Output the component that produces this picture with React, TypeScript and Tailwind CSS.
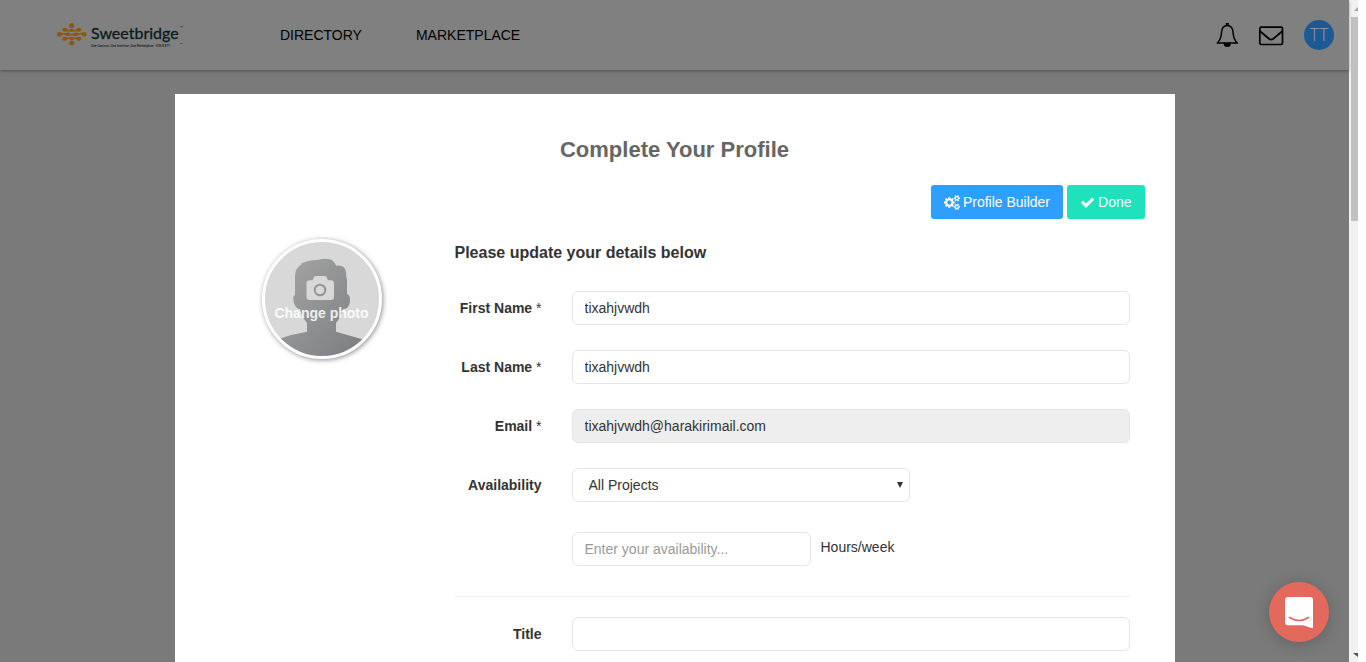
import React from "react";

const field =
  "h-[34px] rounded-md border border-[#e5e5e5] px-3 text-sm text-[#333] outline-none placeholder:text-[#999]";

function Row({ id, label, required, children }: { id: string; label: string; required?: boolean; children: React.ReactNode }) {
  return (
    <div className="flex items-center">
      <label htmlFor={id} className="mr-[30px] w-[87px] shrink-0 whitespace-nowrap text-right text-sm font-bold">
        {label}
        {required && <span className="font-normal"> *</span>}
      </label>
      {children}
    </div>
  );
}

function Logo() {
  return (
    <a href="#" aria-label="Sweetbridge" className="flex w-[132px] shrink-0 items-center">
      <svg viewBox="0 0 132 28" className="h-7 w-[132px]" fontFamily="Lato, sans-serif">
        <g stroke="#8c5710" strokeWidth="1.6" fill="none">
          <path d="M3.500 13.300Q7 12.300 11 13.300T20.500 13.300T28.300 13.300" />
          <path d="M9 9Q12.500 10.500 15.700 9Q19 10.500 22.700 9M9 17.700Q12.500 16.200 15.700 17.700Q19 16.200 22.700 17.700" />
        </g>
        <g fill="#8c5710">
          <circle cx="15.700" cy="4.500" r="2.500" />
          <ellipse cx="8.800" cy="8.800" rx="2.600" ry="2" />
          <ellipse cx="15.700" cy="9.200" rx="2.400" ry="1.500" />
          <ellipse cx="22.800" cy="8.800" rx="2.600" ry="2" />
          <circle cx="3.400" cy="13.300" r="2.400" />
          <ellipse cx="11.500" cy="13.300" rx="2.800" ry="1.700" />
          <ellipse cx="20" cy="13.300" rx="2.800" ry="1.700" />
          <circle cx="28.200" cy="13.300" r="2.400" />
          <ellipse cx="8.800" cy="17.800" rx="2.600" ry="2" />
          <ellipse cx="15.700" cy="17.400" rx="2.400" ry="1.500" />
          <ellipse cx="22.800" cy="17.800" rx="2.600" ry="2" />
          <circle cx="15.700" cy="22.100" r="2.500" />
        </g>
        <text x="35" y="18" fontSize="16" fill="#0c1a20" stroke="#0c1a20" strokeWidth="0.300">Sweetbridge</text>
        <text x="124" y="8" fontSize="4" fill="#0c1a20">™</text>
        <text x="35" y="26" fontSize="3" fontWeight="700" fill="#0c1a20">One Contract, One Interface, One Marketplace - S W E E T !</text>
        <text x="124" y="24" fontSize="3" fill="#0c1a20">™</text>
      </svg>
    </a>
  );
}

function Bell() {
  return (
    <svg viewBox="0 0 24 26" className="h-[26px] w-6" fill="none" stroke="#000" strokeWidth="1.500">
      <path d="M11.300 3.500C7.300 3.500 5.800 6.500 5.500 10.500C5.200 16 4 18.500 1.300 21H21.300C18.600 18.500 17.400 16 17.100 10.500C16.800 6.500 15.300 3.500 11.300 3.500Z" strokeLinejoin="round" />
      <path d="M10.600 3V1.700H12V3" />
      <path d="M8.500 21.500A2.800 2.800 0 0 0 14.100 21.500Z" fill="#000" />
    </svg>
  );
}

function Mail() {
  return (
    <svg viewBox="0 0 26 22" className="h-[22px] w-[26px]" fill="none" stroke="#000" strokeWidth="1.700">
      <rect x="1.800" y="3.200" width="22.700" height="17.300" rx="1.500" />
      <path d="M1.800 7L11.300 15Q13.100 16.300 15 15L24.500 7" />
    </svg>
  );
}

function Cogs() {
  return (
    <svg viewBox="0 0 1920 1792" className="h-[15px] w-4" fill="currentColor">
      <path d="M896 896q0-106-75-181t-181-75-181 75-75 181 75 181 181 75 181-75 75-181zm768 512q0-52-38-90t-90-38-90 38-38 90q0 53 37.5 90.5t90.5 37.5 90.5-37.5 37.5-90.5zm0-1024q0-52-38-90t-90-38-90 38-38 90q0 53 37.5 90.5t90.5 37.5 90.5-37.5 37.5-90.5zm-384 421v185q0 10-7 19.5t-16 10.5l-155 24q-11 35-32 76 34 48 90 115 7 11 7 20 0 12-7 19-23 30-82.5 89.5t-78.5 59.5q-11 0-21-7l-115-90q-37 19-77 31-11 108-23 155-7 24-30 24h-186q-11 0-20-7.5t-10-17.5l-23-153q-34-10-75-31l-118 89q-7 7-20 7-11 0-21-8-144-133-144-160 0-9 7-19 10-14 41-53t47-61q-23-44-35-82l-152-24q-10-1-17-9.5t-7-19.500v-185q0-10 7-19.500t16-10.500l155-24q11-35 32-76-34-48-90-115-7-11-7-20 0-12 7-20 22-30 82-89t79-59q11 0 21 7l115 90q34-18 77-32 11-108 23-154 7-24 30-24h186q11 0 20 7.500t10 17.500l23 153q34 10 75 31l118-89q8-7 20-7 11 0 21 8 144 133 144 160 0 8-7 19-12 16-42 54t-45 60q23 48 34 82l152 23q10 2 17 10.500t7 19.500zm640 533v140q0 16-149 31-12 27-30 52 51 113 51 138 0 4-4 7-122 71-124 71-8 0-46-47t-52-68q-20 2-30 2t-30-2q-14 21-52 68t-46 47q-2 0-124-71-4-3-4-7 0-25 51-138-18-25-30-52-149-15-149-31v-140q0-16 149-31 13-29 30-52-51-113-51-138 0-4 4-7 4-2 35-20t59-34 30-16q8 0 46 46.500t52 67.500q20-2 30-2t30 2q51-71 92-112l6-2q4 0 124 70 4 3 4 7 0 25-51 138 17 23 30 52 149 15 149 31zm0-1024v140q0 16-149 31-12 27-30 52 51 113 51 138 0 4-4 7-122 71-124 71-8 0-46-47t-52-68q-20 2-30 2t-30-2q-14 21-52 68t-46 47q-2 0-124-71-4-3-4-7 0-25 51-138-18-25-30-52-149-15-149-31v-140q0-16 149-31 13-29 30-52-51-113-51-138 0-4 4-7 4-2 35-20t59-34 30-16q8 0 46 46.500t52 67.500q20-2 30-2t30 2q51-71 92-112l6-2q4 0 124 70 4 3 4 7 0 25-51 138 17 23 30 52 149 15 149 31z" />
    </svg>
  );
}

function Check() {
  return (
    <svg viewBox="0 0 1792 1792" className="h-[15px] w-[15px]" fill="currentColor">
      <path d="M1671 566q0 40-28 68l-724 724-136 136q-28 28-68 28t-68-28l-136-136-362-362q-28-28-28-68t28-68l136-136q28-28 68-28t68 28l294 295 656-657q28-28 68-28t68 28l136 136q28 28 28 68z" />
    </svg>
  );
}

function Avatar() {
  return (
    <button className="relative block h-[120px] w-[120px] overflow-hidden rounded-full border-[3px] border-white bg-[#d8d8d8] shadow-[1px_1px_5px_rgba(0,0,0,0.45)]">
      <svg viewBox="0 0 114 114" className="absolute inset-0 h-full w-full">
        <defs>
          <linearGradient id="person" x1="0" y1="0" x2="1" y2="1">
            <stop offset="0" stopColor="#a6a6a6" />
            <stop offset="1" stopColor="#7a7c7e" />
          </linearGradient>
        </defs>
        <path
          fill="url(#person)"
          d="M30 53L30 34Q30 26 37 22L36 21.500Q43 18 52 18Q60 16 65 17.300Q69 18.500 71 23.700Q77 22.500 79.500 26Q82 31 81 33.500L82 38V52Q85 53 85 58Q85 65 80 67L78 67Q76 75 71 81V89.700Q83 93 98 97.500V114H15V96.500Q28 92 42 89.700V81Q37 75 35 67Q31 67 29 61Q27 54 30 53Z"
        />
        <path
          fill="#d8d8d8"
          fillRule="evenodd"
          d="M44.500 38.300H47.500L49 35Q49.500 34 50.500 34H60Q61 34 61.500 35L63 38.300H66Q69 38.300 69 41.300V55Q69 58 66 58H44.500Q41.500 58 41.500 55V41.300Q41.500 38.300 44.500 38.300ZM55 41.700A6.300 6.300 0 1 0 55 54.300A6.300 6.300 0 1 0 55 41.700ZM55 43.700A4.300 4.300 0 1 1 55 52.300A4.300 4.300 0 1 1 55 43.700Z"
        />
      </svg>
      <span className="relative mt-7 block whitespace-nowrap text-center text-sm font-bold text-white/85">Change photo</span>
    </button>
  );
}

export default function App() {
  return (
    <div className="flex h-screen overflow-hidden bg-white font-['Liberation_Sans',Arial,sans-serif] text-[#333]">
      <div className="relative flex min-w-0 flex-1 flex-col bg-[#7a7a7a]">
        <header className="flex h-[70px] shrink-0 items-center bg-[#808080] pl-14 pr-[15px] shadow-[0_1px_3px_rgba(0,0,0,0.35)]">
          <Logo />
          <nav className="ml-[92px] flex flex-1 gap-[54px] text-sm text-black">
            <a href="#">DIRECTORY</a>
            <a href="#">MARKETPLACE</a>
          </nav>
          <div className="flex items-center">
            <button aria-label="Notifications" className="mr-[18px]"><Bell /></button>
            <button aria-label="Messages" className="mr-5"><Mail /></button>
            <button className="flex h-[30px] w-[30px] justify-center rounded-full bg-[#1b5a95] font-['Open_Sans',sans-serif] text-lg leading-7 font-light text-[#999]">TT</button>
          </div>
        </header>
        <main className="mx-auto mt-6 min-h-0 w-full max-w-[1000px] flex-1 overflow-hidden bg-white">
          <h1 className="pt-[41px] text-center text-[22px] leading-[30px] font-bold text-[#666]">Complete Your Profile</h1>
          <div className="mt-5 flex justify-end gap-1 pr-[30px] text-sm text-white">
            <button className="flex h-[34px] items-center gap-[3px] rounded-[3px] bg-[#2f9fff] px-[13px]"><Cogs />Profile Builder</button>
            <button className="flex h-[34px] items-center gap-[3px] rounded-[3px] bg-[#1de2bb] px-[13px]"><Check />Done</button>
          </div>
          <div className="flex pr-[45px]">
            <div className="w-[280px] shrink-0 pl-[87px] pt-5"><Avatar /></div>
            <form className="min-w-0 flex-1 pt-[22px]">
              <h2 className="text-base leading-6 font-bold">Please update your details below</h2>
              <div className="mt-[26px] flex flex-col gap-[25px]">
                <Row id="first" label="First Name" required><input id="first" defaultValue="tixahjvwdh" className={`${field} min-w-0 flex-1 bg-white`} /></Row>
                <Row id="last" label="Last Name" required><input id="last" defaultValue="tixahjvwdh" className={`${field} min-w-0 flex-1 bg-white`} /></Row>
                <Row id="email" label="Email" required><input id="email" readOnly defaultValue="tixahjvwdh@harakirimail.com" className={`${field} min-w-0 flex-1 bg-[#eee]`} /></Row>
                <Row id="projects" label="Availability">
                  <div className="relative w-[338px]">
                    <select id="projects" className={`${field} w-full appearance-none bg-white pl-4`}>
                      <option>All Projects</option>
                    </select>
                    <svg viewBox="0 0 6 6" className="pointer-events-none absolute right-[7px] top-[14px] h-1.5 w-1.5"><path d="M0 0H6L3 6Z" fill="#333" /></svg>
                  </div>
                </Row>
              </div>
              <div className="mt-[30px] flex pl-[117px]">
                <input id="hours" placeholder="Enter your availability..." className={`${field} w-[239px] bg-white`} />
                <label htmlFor="hours" className="ml-2.5 pt-[5px] text-sm">Hours/week</label>
              </div>
              <hr className="mb-5 mt-[30px] border-[#eee]" />
              <Row id="title" label="Title"><input id="title" className={`${field} min-w-0 flex-1 bg-white`} /></Row>
            </form>
          </div>
        </main>
        <button aria-label="Open chat" className="absolute bottom-5 right-5 flex h-[60px] w-[60px] items-center justify-center rounded-full bg-[#e4695d] shadow-[0_2px_16px_rgba(0,0,0,0.2)]">
          <svg viewBox="0 0 28 32" className="h-8 w-7">
            <path fill="#fff" d="M3 1H25Q28 1 28 4V32.500L18 29.300H3Q0 29.300 0 26.300V4Q0 1 3 1Z" />
            <path d="M4.500 21.500Q14 27.500 23.500 21.500" fill="none" stroke="#e4695d" strokeWidth="1.700" strokeLinecap="round" />
          </svg>
        </button>
      </div>
      <div aria-hidden="true" className="mr-2 flex w-[9px] flex-col justify-between bg-[#f1f1f1] pl-0.5">
        <div>
          <svg viewBox="0 0 7 17" className="h-[17px] w-[7px]"><path d="M3 11L7 7V11Z" fill="#a3a3a3" /></svg>
          <div className="h-[204px] bg-[#c1c1c1]" />
        </div>
        <svg viewBox="0 0 7 17" className="h-[17px] w-[7px]"><path d="M2 8H7V12Z" fill="#505050" /></svg>
      </div>
    </div>
  );
}
